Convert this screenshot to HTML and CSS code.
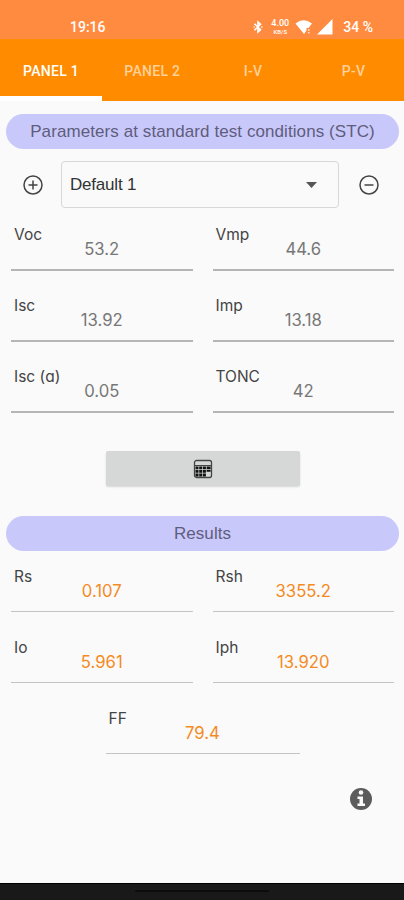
FILE: index.html
```html
<!DOCTYPE html>
<html lang="en">
<head>
    <meta charset="UTF-8">
    <meta name="viewport" content="width=device-width, initial-scale=1.0">
    <title>Panel 1</title>
    <link rel="stylesheet" href="styles.css">
</head>
<body>
    <div class="status-bar">
        <span class="time">19:16</span>
        <div class="status-icons">
            <svg class="bluetooth" width="10" height="14" viewBox="0 0 10 14" fill="none" stroke="#fff" stroke-width="1.6"><path d="M1.500 3.700l6 6L5 12V2l2.500 2.300-6 6"/><path d="M.5 7h1.300M8.300 7h1.300"/></svg>
            <div class="net-speed"><span>4.00</span><span class="unit">KB/S</span></div>
            <svg class="wifi" width="18" height="16" viewBox="0 0 18 16" fill="#fff"><path d="M.5 4.500Q8.500-2 17 4.500l-3.500 4.500h-2v2.500L9 15z"/><path d="M13 10h1.500v2H13zM13 13h1.500v1.500H13z" opacity=".7"/></svg>
            <svg class="signal" width="16" height="16" viewBox="0 0 16 16" fill="#fff"><path d="M15.500 0v15.500H0z"/></svg>
            <span class="battery">34 %</span>
        </div>
    </div>

    <nav class="tabs">
        <button class="tab active">PANEL 1</button>
        <button class="tab">PANEL 2</button>
        <button class="tab">I-V</button>
        <button class="tab">P-V</button>
    </nav>

    <main class="content">
        <h2 class="section-title">Parameters at standard test conditions (STC)</h2>

        <div class="selector">
            <svg width="20" height="20" viewBox="0 0 20 20" fill="none" stroke="#444" stroke-width="1.5"><circle cx="10" cy="10" r="9"/><path d="M5.500 10h9M10 5.500v9"/></svg>
            <div class="dropdown">
                <span>Default 1</span>
                <svg width="11" height="6" viewBox="0 0 11 6" fill="#555"><path d="M0 0h11L5.500 6z"/></svg>
            </div>
            <svg width="20" height="20" viewBox="0 0 20 20" fill="none" stroke="#444" stroke-width="1.5"><circle cx="10" cy="10" r="9"/><path d="M5.500 10h9"/></svg>
        </div>

        <div class="fields">
            <div class="field"><span class="label">Voc</span><span class="value">53.2</span></div>
            <div class="field"><span class="label">Vmp</span><span class="value">44.6</span></div>
            <div class="field"><span class="label">Isc</span><span class="value">13.92</span></div>
            <div class="field"><span class="label">Imp</span><span class="value">13.18</span></div>
            <div class="field"><span class="label">Isc (ɑ)</span><span class="value">0.05</span></div>
            <div class="field"><span class="label">TONC</span><span class="value">42</span></div>
        </div>

        <button class="calculate" aria-label="Calculate">
            <svg width="20" height="20" viewBox="0 0 20 20">
                <rect x="1.500" y="1.500" width="17" height="17" rx="2" fill="#d5d8d7" stroke="#444" stroke-width="1.300"/>
                <path d="M2 6.500h16" stroke="#444"/>
                <g fill="#111">
                    <path d="M2.500 7.500h3v2.700h-3zM6.200 7.500h3v2.700h-3zM9.900 7.500h3v2.700h-3zM13.600 7.500h4v2.700h-4z"/>
                    <path d="M2.500 11h3v2.700h-3zM6.200 11h3v2.700h-3zM9.900 11h3v2.700h-3zM13.600 11h4v1.800h-4z"/>
                    <path d="M2.500 14.500h3v3h-3zM6.200 14.500h3v3h-3zM9.900 14.500h3v3h-3z"/>
                </g>
            </svg>
        </button>

        <h2 class="section-title">Results</h2>

        <div class="fields results">
            <div class="field"><span class="label">Rs</span><span class="value">0.107</span></div>
            <div class="field"><span class="label">Rsh</span><span class="value">3355.2</span></div>
            <div class="field"><span class="label">Io</span><span class="value">5.961</span></div>
            <div class="field"><span class="label">Iph</span><span class="value">13.920</span></div>
            <div class="field fill-factor"><span class="label">FF</span><span class="value">79.4</span></div>
        </div>

        <svg class="info" width="22" height="22" viewBox="0 0 22 22"><circle cx="11" cy="11" r="11" fill="#5c5c5c"/><circle cx="11" cy="4.500" r="2.300" fill="#fafafa"/><path d="M7.500 8.500h5.500v7h2v2.500H7.500v-2.500h2V11h-2z" fill="#fafafa"/></svg>
    </main>

    <div class="nav-bar"><span class="handle"></span></div>
</body>
</html>
```
FILE: styles.css
```css
:root {
    --orange: #ff8c00;
    --status: #ff8b40;
    --lilac: #c9c8fb;
    --background: #fafafa;
}

* {
    margin: 0;
    padding: 0;
    box-sizing: border-box;
}

body {
    height: 900px;
    display: flex;
    flex-direction: column;
    background: var(--background);
    font-family: Inter, "Liberation Sans", sans-serif;
    overflow: hidden;
}

button {
    border: none;
    background: none;
    font-family: inherit;
}

.status-bar {
    height: 39px;
    padding: 15px 31px 0 70px;
    display: flex;
    justify-content: space-between;
    background: var(--status);
    color: #fff;
    font-family: Roboto, sans-serif;
    font-size: 14px;
    font-weight: 500;
    line-height: 24px;
}

.status-icons {
    display: flex;
    align-items: center;
}

.bluetooth {
    margin-right: 7px;
}

.net-speed {
    width: 20px;
    margin-right: 5px;
    display: flex;
    flex-direction: column;
    align-items: center;
    font-size: 9px;
    line-height: 9px;
}

.unit {
    font-size: 6px;
    line-height: 7px;
}

.wifi {
    margin-right: 4px;
}

.signal {
    margin-right: 10px;
}

.tabs {
    height: 62px;
    display: grid;
    grid-template-columns: repeat(4, 1fr);
    background: var(--orange);
}

.tab {
    padding-top: 7px;
    border-bottom: 5px solid transparent;
    color: #ffd09a;
    font-family: Roboto, sans-serif;
    font-size: 14px;
    font-weight: 500;
    letter-spacing: 0.3px;
}

.tab.active {
    width: 102px;
    border-color: #fff;
    color: #fff;
}

.content {
    flex: 1;
    padding: 13px 5px 0 6px;
    display: flex;
    flex-direction: column;
}

.section-title {
    height: 35px;
    border-radius: 18px;
    background: var(--lilac);
    color: #5f5d7c;
    font-family: "Liberation Sans", sans-serif;
    font-size: 17px;
    font-weight: 400;
    letter-spacing: 0.08px;
    line-height: 35px;
    text-align: center;
}

.selector {
    margin: 12px 0 0 17px;
    display: flex;
    align-items: center;
}

.dropdown {
    width: 278px;
    height: 47px;
    margin: 0 20px 0 18px;
    padding: 0 21px 0 8px;
    display: flex;
    align-items: center;
    justify-content: space-between;
    border: 1px solid #d8d8d8;
    border-radius: 4px;
    color: #333;
    font-family: "Liberation Sans", sans-serif;
    font-size: 17px;
    letter-spacing: -0.2px;
}

.fields {
    margin: 17px 5px 0;
    display: grid;
    grid-template-columns: 1fr 1fr;
    grid-auto-rows: 46px;
    gap: 25px 20px;
}

.field {
    padding-left: 3px;
    display: flex;
    flex-direction: column;
    border-bottom: 2px solid #b5b5b5;
    font-size: 16.7px;
    line-height: 20px;
}

.label {
    color: #444;
    font-size: 15.5px;
}

.value {
    margin: -6px 3px 0 0;
    color: #777;
    text-align: center;
}

.calculate {
    width: 194px;
    height: 35px;
    margin: 38px auto 30px;
    display: flex;
    align-items: center;
    justify-content: center;
    border-radius: 2px;
    background: #d5d8d7;
    box-shadow: 0 1px 2px rgba(0, 0, 0, 0.15);
}

.results {
    margin-top: 16px;
    grid-auto-rows: 45px;
    gap: 26px 20px;
}

.results .field {
    border-bottom: 1px solid #c4c4c4;
}

.results .value {
    color: #f58a1f;
}

.fill-factor {
    grid-column: 1 / -1;
    width: 194px;
    margin: 0 auto;
}

.info {
    margin: 34px 27px 0 auto;
}

.nav-bar {
    height: 17px;
    padding-top: 6px;
    border-top: 1px solid #000;
    background: #191919;
}

.handle {
    display: block;
    width: 134px;
    height: 2px;
    margin: 0 auto;
    border-radius: 1px;
    background: #0c0c0c;
}
```
